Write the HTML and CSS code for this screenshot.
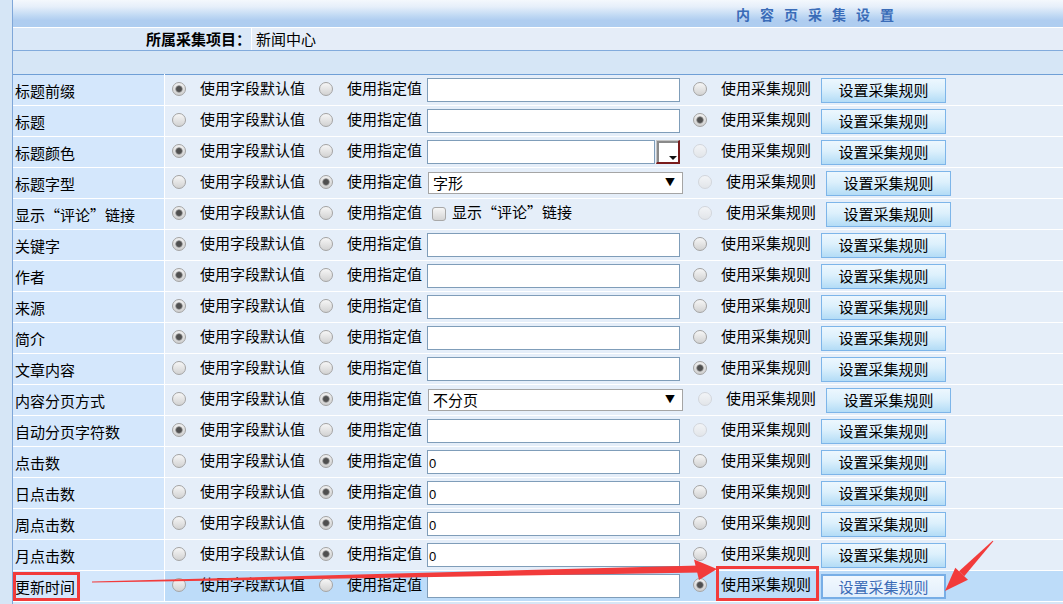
FILE: index.html
```html
<!DOCTYPE html>
<html lang="zh-CN">
<head>
    <meta charset="UTF-8">
    <title>内容页采集设置</title>
    <link rel="stylesheet" href="styles.css">
</head>
<body>
    <div class="wrap">
        <div class="caption">内容页采集设置</div>
        <div class="info">
            <div class="info-label">所属采集项目：</div>
            <div class="info-value">新闻中心</div>
        </div>
        <div class="gap"></div>

        <table class="grid">
            <tr>
                <td class="name">标题前缀</td>
                <td><div class="ctl">
                    <label class="opt opt1"><input type="radio" name="f1" checked><span>使用字段默认值</span></label>
                    <label class="opt opt2"><input type="radio" name="f1"><span>使用指定值</span></label>
                    <span class="fld"><input type="text" class="txt"></span>
                    <label class="opt opt3"><input type="radio" name="f1"><span>使用采集规则</span></label>
                    <button class="btn">设置采集规则</button>
                </div></td>
            </tr>
            <tr>
                <td class="name">标题</td>
                <td><div class="ctl">
                    <label class="opt opt1"><input type="radio" name="f2"><span>使用字段默认值</span></label>
                    <label class="opt opt2"><input type="radio" name="f2"><span>使用指定值</span></label>
                    <span class="fld"><input type="text" class="txt"></span>
                    <label class="opt opt3"><input type="radio" name="f2" checked><span>使用采集规则</span></label>
                    <button class="btn">设置采集规则</button>
                </div></td>
            </tr>
            <tr>
                <td class="name">标题颜色</td>
                <td><div class="ctl">
                    <label class="opt opt1"><input type="radio" name="f3" checked><span>使用字段默认值</span></label>
                    <label class="opt opt2"><input type="radio" name="f3"><span>使用指定值</span></label>
                    <span class="fld"><input type="text" class="txt txt-short"><span class="pick"></span></span>
                    <label class="opt opt3"><input type="radio" name="f3" disabled><span>使用采集规则</span></label>
                    <button class="btn">设置采集规则</button>
                </div></td>
            </tr>
            <tr>
                <td class="name">标题字型</td>
                <td><div class="ctl">
                    <label class="opt opt1"><input type="radio" name="f4"><span>使用字段默认值</span></label>
                    <label class="opt opt2"><input type="radio" name="f4" checked><span>使用指定值</span></label>
                    <span class="fld fld-wide"><span class="sel"><select><option>字形</option></select></span></span>
                    <label class="opt opt3"><input type="radio" name="f4" disabled><span>使用采集规则</span></label>
                    <button class="btn">设置采集规则</button>
                </div></td>
            </tr>
            <tr>
                <td class="name">显示“评论”链接</td>
                <td><div class="ctl">
                    <label class="opt opt1"><input type="radio" name="f5" checked><span>使用字段默认值</span></label>
                    <label class="opt opt2"><input type="radio" name="f5"><span>使用指定值</span></label>
                    <span class="fld fld-wide"><label class="chk"><input type="checkbox"><span>显示“评论”链接</span></label></span>
                    <label class="opt opt3"><input type="radio" name="f5" disabled><span>使用采集规则</span></label>
                    <button class="btn">设置采集规则</button>
                </div></td>
            </tr>
            <tr>
                <td class="name">关键字</td>
                <td><div class="ctl">
                    <label class="opt opt1"><input type="radio" name="f6" checked><span>使用字段默认值</span></label>
                    <label class="opt opt2"><input type="radio" name="f6"><span>使用指定值</span></label>
                    <span class="fld"><input type="text" class="txt"></span>
                    <label class="opt opt3"><input type="radio" name="f6"><span>使用采集规则</span></label>
                    <button class="btn">设置采集规则</button>
                </div></td>
            </tr>
            <tr>
                <td class="name">作者</td>
                <td><div class="ctl">
                    <label class="opt opt1"><input type="radio" name="f7" checked><span>使用字段默认值</span></label>
                    <label class="opt opt2"><input type="radio" name="f7"><span>使用指定值</span></label>
                    <span class="fld"><input type="text" class="txt"></span>
                    <label class="opt opt3"><input type="radio" name="f7"><span>使用采集规则</span></label>
                    <button class="btn">设置采集规则</button>
                </div></td>
            </tr>
            <tr>
                <td class="name">来源</td>
                <td><div class="ctl">
                    <label class="opt opt1"><input type="radio" name="f8" checked><span>使用字段默认值</span></label>
                    <label class="opt opt2"><input type="radio" name="f8"><span>使用指定值</span></label>
                    <span class="fld"><input type="text" class="txt"></span>
                    <label class="opt opt3"><input type="radio" name="f8"><span>使用采集规则</span></label>
                    <button class="btn">设置采集规则</button>
                </div></td>
            </tr>
            <tr>
                <td class="name">简介</td>
                <td><div class="ctl">
                    <label class="opt opt1"><input type="radio" name="f9" checked><span>使用字段默认值</span></label>
                    <label class="opt opt2"><input type="radio" name="f9"><span>使用指定值</span></label>
                    <span class="fld"><input type="text" class="txt"></span>
                    <label class="opt opt3"><input type="radio" name="f9"><span>使用采集规则</span></label>
                    <button class="btn">设置采集规则</button>
                </div></td>
            </tr>
            <tr>
                <td class="name">文章内容</td>
                <td><div class="ctl">
                    <label class="opt opt1"><input type="radio" name="f10"><span>使用字段默认值</span></label>
                    <label class="opt opt2"><input type="radio" name="f10"><span>使用指定值</span></label>
                    <span class="fld"><input type="text" class="txt"></span>
                    <label class="opt opt3"><input type="radio" name="f10" checked><span>使用采集规则</span></label>
                    <button class="btn">设置采集规则</button>
                </div></td>
            </tr>
            <tr>
                <td class="name">内容分页方式</td>
                <td><div class="ctl">
                    <label class="opt opt1"><input type="radio" name="f11"><span>使用字段默认值</span></label>
                    <label class="opt opt2"><input type="radio" name="f11" checked><span>使用指定值</span></label>
                    <span class="fld fld-wide"><span class="sel"><select><option>不分页</option></select></span></span>
                    <label class="opt opt3"><input type="radio" name="f11" disabled><span>使用采集规则</span></label>
                    <button class="btn">设置采集规则</button>
                </div></td>
            </tr>
            <tr>
                <td class="name">自动分页字符数</td>
                <td><div class="ctl">
                    <label class="opt opt1"><input type="radio" name="f12" checked><span>使用字段默认值</span></label>
                    <label class="opt opt2"><input type="radio" name="f12"><span>使用指定值</span></label>
                    <span class="fld"><input type="text" class="txt"></span>
                    <label class="opt opt3"><input type="radio" name="f12" disabled><span>使用采集规则</span></label>
                    <button class="btn">设置采集规则</button>
                </div></td>
            </tr>
            <tr>
                <td class="name">点击数</td>
                <td><div class="ctl">
                    <label class="opt opt1"><input type="radio" name="f13"><span>使用字段默认值</span></label>
                    <label class="opt opt2"><input type="radio" name="f13" checked><span>使用指定值</span></label>
                    <span class="fld"><input type="text" class="txt" value="0"></span>
                    <label class="opt opt3"><input type="radio" name="f13"><span>使用采集规则</span></label>
                    <button class="btn">设置采集规则</button>
                </div></td>
            </tr>
            <tr>
                <td class="name">日点击数</td>
                <td><div class="ctl">
                    <label class="opt opt1"><input type="radio" name="f14"><span>使用字段默认值</span></label>
                    <label class="opt opt2"><input type="radio" name="f14" checked><span>使用指定值</span></label>
                    <span class="fld"><input type="text" class="txt" value="0"></span>
                    <label class="opt opt3"><input type="radio" name="f14"><span>使用采集规则</span></label>
                    <button class="btn">设置采集规则</button>
                </div></td>
            </tr>
            <tr>
                <td class="name">周点击数</td>
                <td><div class="ctl">
                    <label class="opt opt1"><input type="radio" name="f15"><span>使用字段默认值</span></label>
                    <label class="opt opt2"><input type="radio" name="f15" checked><span>使用指定值</span></label>
                    <span class="fld"><input type="text" class="txt" value="0"></span>
                    <label class="opt opt3"><input type="radio" name="f15"><span>使用采集规则</span></label>
                    <button class="btn">设置采集规则</button>
                </div></td>
            </tr>
            <tr>
                <td class="name">月点击数</td>
                <td><div class="ctl">
                    <label class="opt opt1"><input type="radio" name="f16"><span>使用字段默认值</span></label>
                    <label class="opt opt2"><input type="radio" name="f16" checked><span>使用指定值</span></label>
                    <span class="fld"><input type="text" class="txt" value="0"></span>
                    <label class="opt opt3"><input type="radio" name="f16"><span>使用采集规则</span></label>
                    <button class="btn">设置采集规则</button>
                </div></td>
            </tr>
            <tr class="hover">
                <td class="name">更新时间</td>
                <td><div class="ctl">
                    <label class="opt opt1"><input type="radio" name="f17"><span>使用字段默认值</span></label>
                    <label class="opt opt2"><input type="radio" name="f17"><span>使用指定值</span></label>
                    <span class="fld"><input type="text" class="txt"></span>
                    <label class="opt opt3"><input type="radio" name="f17" checked><span>使用采集规则</span></label>
                    <button class="btn">设置采集规则</button>
                </div></td>
            </tr>
        </table>
    </div>

    <!-- 截图标注 -->
    <svg class="marks" width="1063" height="604" viewBox="0 0 1063 604">
        <rect x="14.5" y="573.5" width="64" height="26" fill="none" stroke="#f23b3b" stroke-width="3"/>
        <rect x="717.5" y="567.5" width="100" height="32" fill="none" stroke="#f23b3b" stroke-width="3"/>
        <polygon points="92,581.6 700,565.5 701,572.5 92,582.6" fill="#f23b3b"/>
        <polygon points="717,569 694,559.5 699,580" fill="#f23b3b"/>
        <polygon points="992.6,540.7 993.4,541.3 964.2,576.2 959,571.2" fill="#f23b3b"/>
        <polygon points="945,591 955.3,567.7 968,579.8" fill="#f23b3b"/>
    </svg>
</body>
</html>
```

FILE: styles.css
```css
html, body {
    margin: 0;
    padding: 0;
}

body {
    background: #d6e6f6;
    font-family: "Noto Sans CJK SC", "Microsoft YaHei", sans-serif;
    font-size: 15px;
    color: #000;
    overflow: hidden;
    width: 1063px;
    height: 604px;
    position: relative;
}

.wrap {
    margin-left: 12px;
    border-left: 1px solid #7fa7d9;
    min-height: 604px;
    overflow: hidden;
}

.caption {
    height: 27px;
    line-height: 28px;
    border-bottom: 1px solid #ffffff;
    background: linear-gradient(#f4f8fd 0%, #e6effa 25%, #c3dbf4 55%, #afcdf0 75%, #aecdf0 100%);
    padding-left: 723px;
    font-size: 14px;
    font-weight: bold;
    letter-spacing: 10px;
    color: #3a6cb8;
    white-space: nowrap;
}

.info {
    display: flex;
    height: 22px;
    border-bottom: 1px solid #82abdc;
    background: #e5edf8;
    font-size: 15px;
    line-height: 22px;
}

.info-label {
    width: 238px;
    text-align: right;
    font-weight: bold;
    background: #dae8f8;
    border-right: 1px solid #ffffff;
}

.info-value {
    padding-left: 4px;
}

.gap {
    height: 23px;
}

.grid {
    width: 100%;
    border-collapse: collapse;
    border-top: 1px solid #6f9fd6;
}

.grid td {
    height: 30px;
    padding: 0;
    border-bottom: 1px solid #ffffff;
    background: #e5eef9;
    vertical-align: middle;
}

.grid td.name {
    width: 149px;
    padding-left: 2px;
    background: #d4e7fc;
    border-right: 1px solid #ffffff;
    line-height: 20px;
    padding-top: 2px;
    height: 28px;
    white-space: nowrap;
}

.grid tr.hover td {
    background: #bddcf9;
}

.grid tr.hover td.name {
    background: #d4e7fc;
}

.ctl {
    display: flex;
    align-items: center;
    padding-left: 7px;
    line-height: 20px;
}

.opt {
    display: flex;
    align-items: center;
    white-space: nowrap;
    flex: none;
}

.opt span {
    position: relative;
    top: -2px;
}

.opt1 { width: 147px; }
.opt2 { width: 108px; }
.opt3 { width: 128px; }

input[type=radio] {
    appearance: none;
    -webkit-appearance: none;
    width: 14px;
    height: 14px;
    margin: 0 14px 0 0;
    border-radius: 50%;
    border: 1px solid #a4a4a4;
    background: linear-gradient(#f6f6f6, #d2d2d2);
    box-sizing: border-box;
    position: relative;
    top: -1px;
    flex: none;
}

input[type=radio]:checked {
    background: radial-gradient(circle, #4f4f4f 0, #4f4f4f 2.4px, #9a9a9a 3.4px, transparent 4px), linear-gradient(#f0f0f0, #cfcfcf);
}

input[type=radio]:disabled {
    border-color: #d2d6dc;
    background: linear-gradient(#f2f4f7, #e2e5e9);
}

.fld {
    display: flex;
    align-items: center;
    width: 253px;
    margin-right: 13px;
    flex: none;
}

.fld-wide {
    width: 255px;
    margin-left: 1px;
    margin-right: 15px;
}

.txt {
    width: 253px;
    height: 24px;
    box-sizing: border-box;
    border: 1px solid #7f9db9;
    background: #fff;
    padding: 2px 1px 0;
    margin: 0;
    font-family: "Liberation Sans", sans-serif;
    font-size: 13px;
    outline: none;
}

.txt-short {
    width: 229px;
}

.pick {
    width: 24px;
    height: 24px;
    box-sizing: border-box;
    margin-left: 1px;
    border-style: solid;
    border-width: 1px 2px 2px 1px;
    border-color: #c4c4c4 #7a1c1c #7a1c1c #c4c4c4;
    background: #fff;
    box-shadow: inset 2px 2px 0 #8a8a8a;
    position: relative;
}

.pick::after {
    content: "";
    position: absolute;
    right: 1px;
    bottom: 2px;
    width: 0;
    height: 0;
    border-left: 4px solid transparent;
    border-right: 4px solid transparent;
    border-top: 4px solid #111;
}

.sel {
    position: relative;
    display: block;
    width: 255px;
}

.sel select {
    appearance: none;
    -webkit-appearance: none;
    width: 255px;
    height: 22px;
    border: 1px solid #a5a5a5;
    border-radius: 0;
    background: #fff;
    font-family: "Noto Sans CJK SC", sans-serif;
    font-size: 15px;
    padding: 0 0 0 4px;
    margin: 0;
    line-height: 20px;
    color: #000;
}

.sel::after {
    content: "▼";
    position: absolute;
    right: 8px;
    top: 4px;
    font-size: 10px;
    line-height: 12px;
    color: #000;
    pointer-events: none;
}

.chk {
    display: flex;
    align-items: center;
    padding-left: 4px;
    white-space: nowrap;
}

.chk span {
    position: relative;
    top: -2px;
}

input[type=checkbox] {
    appearance: none;
    -webkit-appearance: none;
    width: 14px;
    height: 14px;
    margin: 0 6px 0 0;
    border: 1px solid #a8a8a8;
    border-radius: 3px;
    background: linear-gradient(#f6f6f6, #d4d4d4);
    box-sizing: border-box;
}

.btn {
    width: 125px;
    height: 25px;
    padding: 0;
    margin: 0;
    flex: none;
    border: 1px solid #7db5e9;
    background: linear-gradient(#edf7fe 0%, #dcf0fc 45%, #b3dcf6 100%);
    font-family: "Noto Sans CJK SC", sans-serif;
    font-size: 15px;
    line-height: 22px;
    color: #000;
    cursor: pointer;
}

.hover .btn {
    border: 2px solid #78aee6;
    background: linear-gradient(#f2f8fe, #e2effc);
    color: #3b6bb6;
}

.marks {
    position: absolute;
    left: 0;
    top: 0;
    pointer-events: none;
}
```
